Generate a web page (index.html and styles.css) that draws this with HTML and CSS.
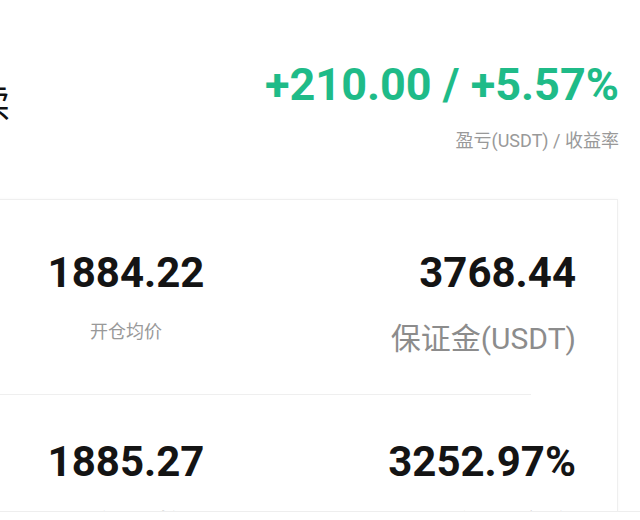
FILE: index.html
```html
<!DOCTYPE html>
<html lang="zh-CN">
<head>
    <meta charset="UTF-8">
    <meta name="viewport" content="width=device-width, initial-scale=1.0">
    <title>持仓详情</title>
    <link rel="stylesheet" href="styles.css">
</head>
<body>
    <div class="screen">
        <div class="header">
            <div class="title">永续</div>
            <div class="pnl">
                <div class="pnl-value">+210.00 / +5.57%</div>
                <div class="pnl-label">盈亏(USDT) / 收益率</div>
            </div>
        </div>

        <div class="card">
            <div class="stat-row first">
                <div class="stat left">
                    <div class="stat-value">1884.22</div>
                    <div class="stat-label small">开仓均价</div>
                </div>
                <div class="stat right">
                    <div class="stat-value">3768.44</div>
                    <div class="stat-label">保证金(USDT)</div>
                </div>
            </div>
            <div class="divider"></div>
            <div class="stat-row second">
                <div class="stat left">
                    <div class="stat-value">1885.27</div>
                    <div class="stat-label">最新价格</div>
                </div>
                <div class="stat right">
                    <div class="stat-value">3252.97%</div>
                    <div class="stat-label">保证金率</div>
                </div>
            </div>
        </div>
    </div>

    <div class="bottom-bar"></div>
</body>
</html>
```

FILE: styles.css
```css
html, body {
    margin: 0;
    height: 520px;
    overflow: hidden;
    background: #fff;
}
body {
    font-family: Roboto, "Noto Sans CJK SC", sans-serif;
    color: #1a1a1a;
}
.screen {
    width: 640px;
    overflow: hidden;
}
.header {
    display: flex;
    justify-content: space-between;
    align-items: flex-start;
    padding: 58px 21px 0 0;
    height: 141px;
}
.title {
    font-size: 38px;
    line-height: 1.3;
    margin-top: 21px;
    margin-left: -66px;
    color: #111;
}
.pnl {
    text-align: right;
}
.pnl-value {
    font-size: 45px;
    line-height: 53px;
    font-weight: 700;
    color: #1fbb88;
}
.pnl-label {
    margin-top: 18px;
    font-size: 18px;
    line-height: 24px;
    color: #999;
}
.card {
    margin: 0 22px 0 -20px;
    border: 1px solid #efefef;
    border-bottom: none;
    height: 400px;
    box-shadow: 0 0 4px rgba(0, 0, 0, 0.03);
}
.stat-row {
    display: flex;
    justify-content: space-between;
    padding: 42px 41px 36px 0;
}
.stat-row.first {
    padding-top: 48px;
}
.stat.left {
    width: 290px;
    text-align: center;
}
.stat.right {
    text-align: right;
}
.stat-value {
    font-size: 42px;
    line-height: 50px;
    font-weight: 700;
    color: #141414;
}
.stat-label {
    margin-top: 22px;
    font-size: 30px;
    line-height: 38px;
    color: #8c8c8c;
}
.stat-label.small {
    font-size: 18px;
    line-height: 24px;
    color: #999;
}
.second .stat-label {
    margin-top: 20px;
}
.divider {
    height: 1px;
    background: #efefef;
    margin-right: 86px;
}
.bottom-bar {
    position: fixed;
    left: 0;
    right: 0;
    bottom: 0;
    height: 8px;
    background: #fff;
    border-top: 1px solid #eeeeee;
}
```
